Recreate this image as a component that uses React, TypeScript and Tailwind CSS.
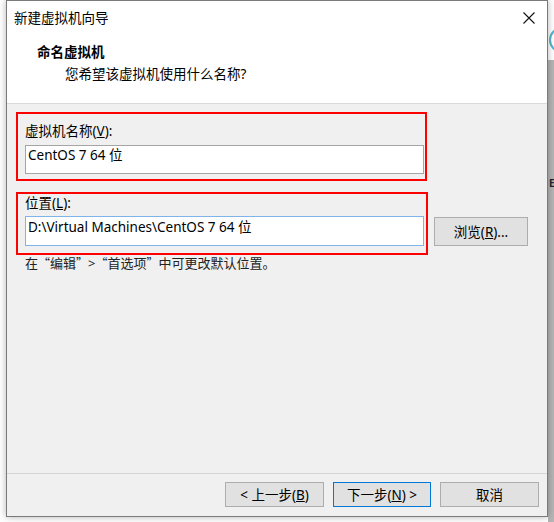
const Q = ({ c }: { c: string }) => <span className="font-['Noto_Sans_CJK_SC',sans-serif] text-[12px]">{c}</span>;

export default function App() {
  return (
    <div className="flex w-[554px] h-[522px] overflow-hidden bg-white font-['Noto_Sans','Noto_Sans_CJK_SC',sans-serif] text-[13.5px] text-black">
      <div className="w-[6px] shrink-0" />

      {/* Wizard dialog */}
      <div className="relative z-10 flex flex-col w-[542px] h-[517px] shrink-0 border border-[#7a7a7a] bg-[#f0f0f0] shadow-[0_0_7px_rgba(0,0,0,0.3)]">
        {/* Title + header */}
        <div className="h-[103px] bg-white border-b border-[#dadada]">
          <div className="flex items-center justify-between h-[34px] pl-[7px] pr-[12px]">
            <span className="leading-[16px]">新建虚拟机向导</span>
            <svg width="12" height="12" viewBox="0 0 12 12" fill="none" stroke="#111" strokeWidth="1.1">
              <path d="M0.5 0.5 L11.5 11.5 M11.5 0.5 L0.5 11.5" />
            </svg>
          </div>
          <div className="pl-[30px] mt-[9px] font-bold leading-[16px]">命名虚拟机</div>
          <div className="pl-[58px] mt-[6px] leading-[16px]">您希望该虚拟机使用什么名称?</div>
        </div>

        {/* Body */}
        <div className="flex-1 pt-[8px] pl-[9px]">
          <div className="w-[411px] h-[69px] border-2 border-[#ff0000] pl-[7px]">
            <div className="mt-[9px] leading-[16px]">
              虚拟机名称(<span className="underline">V</span>):
            </div>
            <div className="mt-[6px] w-[399px] h-[29px] border border-[#a5a5a5] bg-white pl-[2px] pt-[1px] leading-[16px]">
              CentOS 7 64 位
            </div>
          </div>

          <div className="flex items-start mt-[11px]">
            <div className="w-[412px] h-[63px] border-2 border-[#ff0000] pl-[7px]">
              <div className="mt-[1px] leading-[16px]">
                位置(<span className="underline">L</span>):
              </div>
              <div className="mt-[5px] w-[399px] h-[30px] border border-[#7eb4ea] bg-white pl-[2px] pt-[2px] leading-[16px]">
                D:\Virtual Machines\CentOS 7 64 位
              </div>
            </div>
            <button className="ml-[6px] mt-[25px] w-[94px] h-[29px] border border-[#adadad] bg-[#e1e1e1] leading-[16px]">
              浏览(<span className="underline">R</span>)...
            </button>
          </div>

          <div className="pl-[9px] leading-[16px] text-[#222] text-[13px]">
            在<Q c="“" />编辑<Q c="”" />&gt;<Q c="“" />首选项<Q c="”" />中可更改默认位置。
          </div>
        </div>

        {/* Footer buttons */}
        <div className="flex justify-end items-start gap-[9px] h-[43px] pt-[8px] pr-[8px] border-t border-[#d5d5d5]">
          <button className="w-[99px] h-[25px] border border-[#adadad] bg-[#e1e1e1] leading-[16px]">
            &lt; 上一步(<span className="underline">B</span>)
          </button>
          <button className="w-[98px] h-[25px] border border-[#0078d7] bg-[#e1e1e1] leading-[16px]">
            下一步(<span className="underline">N</span>) &gt;
          </button>
          <button className="w-[99px] h-[25px] border border-[#adadad] bg-[#e1e1e1] leading-[16px]">
            取消
          </button>
        </div>
      </div>

      {/* Window peeking behind on the right */}
      <div className="flex flex-col w-[6px] shrink-0 overflow-hidden">
        <div className="relative h-[60px] bg-white">
          <div className="absolute left-[1px] top-[27px] w-[26px] h-[26px] rounded-full border-2 border-[#5ab3c8]" />
        </div>
        <div className="flex-1 bg-[#b5b5b5] pl-[1px] pt-[112px]">
          <span className="font-bold text-[10px] leading-[12px] text-[#222]">E</span>
        </div>
      </div>
    </div>
  );
}
